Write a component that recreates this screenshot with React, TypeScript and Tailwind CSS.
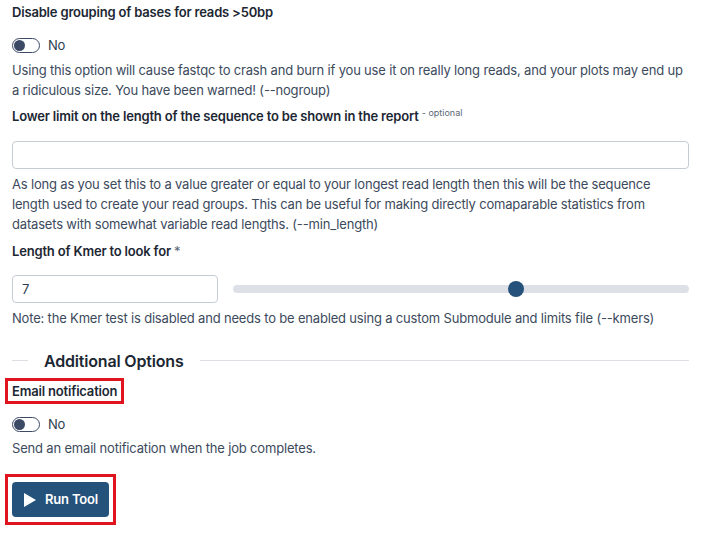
import React from "react";

function Toggle() {
  return (
    <div className="flex items-center gap-2">
      <div className="w-[28px] h-[15px] rounded-full border border-[#3d4a66] bg-white flex items-center px-[1px]">
        <div className="w-[11px] h-[11px] rounded-full bg-[#3d4a66]" />
      </div>
      <span className="text-[13px] text-[#2c3e50]">No</span>
    </div>
  );
}

export default function App() {
  return (
    <div
      className="w-[701px] h-[536px] bg-white px-[12px] pt-[3px] text-[#2c3e50] overflow-hidden tracking-[-0.18px]"
      style={{ fontFamily: "Inter, 'Noto Sans', sans-serif" }}
    >
      <div className="text-[13px] font-semibold text-[#1c2733] leading-[18px]">
        Disable grouping of bases for reads &gt;50bp
      </div>
      <div className="mt-[15px]">
        <Toggle />
      </div>
      <p className="mt-[4px] text-[13px] leading-[20px] text-[#3c4a5c]">
        Using this option will cause fastqc to crash and burn if you use it on really long reads, and your plots may end up a ridiculous size. You have been warned! (--nogroup)
      </p>
      <div className="mt-[7px] text-[13px] font-semibold text-[#1c2733] leading-[18px]">
        Lower limit on the length of the sequence to be shown in the report{" "}
        <span className="text-[9px] font-normal text-[#5a6878] tracking-normal align-top relative top-[-3px]">- optional</span>
      </div>
      <input
        className="mt-[16px] block w-full h-[28px] border border-[#c6ccd5] rounded-[4px] px-2 text-[13px]"
        type="text"
      />
      <p className="mt-[5px] text-[13px] leading-[20px] text-[#3c4a5c]">
        As long as you set this to a value greater or equal to your longest read length then this will be the sequence length used to create your read groups. This can be useful for making directly comaparable statistics from datasets with somewhat variable read lengths. (--min_length)
      </p>
      <div className="mt-[8px] text-[13px] font-semibold text-[#1c2733] leading-[18px]">
        Length of Kmer to look for <span className="font-normal text-[#5a6878]">*</span>
      </div>
      <div className="mt-[15px] flex items-center gap-[15px]">
        <input
          className="block w-[206px] h-[28px] border border-[#c6ccd5] rounded-[4px] px-[9px] text-[13px] text-[#2c3e50]"
          type="text"
          defaultValue="7"
        />
        <div className="relative flex-1 h-[8px] rounded-full bg-[#dde1e7]">
          <div className="absolute top-1/2 left-[283px] -translate-y-1/2 -translate-x-1/2 w-[16px] h-[16px] rounded-full bg-[#25527a]" />
        </div>
      </div>
      <p className="mt-[5px] text-[13px] leading-[20px] text-[#3c4a5c]">
        Note: the Kmer test is disabled and needs to be enabled using a custom Submodule and limits file (--kmers)
      </p>
      <div className="mt-[23px] flex items-center">
        <div className="w-[16px] h-px bg-[#dcdfe3]" />
        <div className="px-[16px] text-[16px] font-semibold text-[#1c2733] leading-[20px]">Additional Options</div>
        <div className="flex-1 h-px bg-[#dcdfe3]" />
      </div>
      <div className="mt-[7px] -ml-[7px] w-fit border-[3px] border-[#e0141e] px-[4px] py-[1px]">
        <div className="text-[13px] font-semibold text-[#1c2733] leading-[18px]">Email notification</div>
      </div>
      <div className="mt-[11px]">
        <Toggle />
      </div>
      <p className="mt-[4px] text-[13px] leading-[20px] text-[#3c4a5c]">
        Send an email notification when the job completes.
      </p>
      <div className="mt-[16px] -ml-[7px] w-fit border-[3px] border-[#e0141e] px-[4px] py-[5px]">
        <button className="flex items-center gap-[8px] h-[35px] px-[11px] rounded-[4px] bg-[#25527a] text-white text-[13px] font-semibold">
          <svg width="14" height="16" viewBox="0 0 14 16">
            <path d="M1 1 L13 8 L1 15 Z" fill="white" />
          </svg>
          Run Tool
        </button>
      </div>
    </div>
  );
}
